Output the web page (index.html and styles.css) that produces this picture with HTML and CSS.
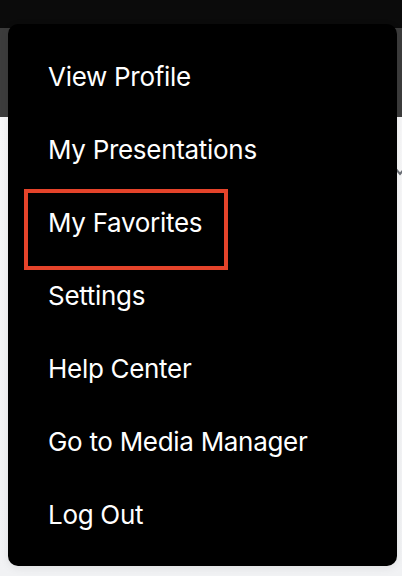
FILE: index.html
```html
<!DOCTYPE html>
<html lang="en">
<head>
<meta charset="utf-8">
<title>Menu</title>
<link rel="stylesheet" href="styles.css">
</head>
<body>
<div class="page">
  <div class="topbar"></div>
  <div class="toolbar"></div>
  <div class="content">
    <svg class="chevron" width="12" height="12" viewBox="0 0 12 12"><path d="M1 3 L6 9 L11 3" fill="none" stroke="#6b6f76" stroke-width="2"/></svg>
  </div>
  <nav class="menu">
    <a class="item">View Profile</a>
    <a class="item">My Presentations</a>
    <a class="item">My Favorites</a>
    <a class="item">Settings</a>
    <a class="item">Help Center</a>
    <a class="item">Go to Media Manager</a>
    <a class="item">Log Out</a>
    <div class="highlight"></div>
  </nav>
</div>
</body>
</html>
```
FILE: styles.css
```css
html, body {
  margin: 0;
  padding: 0;
}
body {
  width: 402px;
  height: 576px;
  overflow: hidden;
  font-family: Inter, "Liberation Sans", sans-serif;
}
.page {
  position: relative;
  width: 402px;
  height: 576px;
  display: flex;
  flex-direction: column;
  background: #f3f4f6;
}
.topbar {
  height: 28px;
  background: #0b0b0b;
}
.toolbar {
  height: 89px;
  background: #3c3c3c;
}
.content {
  flex: 1;
  position: relative;
  background: linear-gradient(#f7f7f8, #f1f2f4);
}
.chevron {
  position: absolute;
  left: 394px;
  top: 48px;
}
.menu {
  position: absolute;
  left: 8px;
  top: 24px;
  width: 389px;
  height: 542px;
  box-sizing: border-box;
  padding: 16px 0 15px;
  background: #000;
  border-radius: 10px;
  box-shadow: 0 2px 8px rgba(0, 0, 0, 0.08);
  display: flex;
  flex-direction: column;
}
.item {
  height: 73px;
  display: flex;
  align-items: center;
  padding-left: 40px;
  color: #fff;
  font-size: 26px;
  letter-spacing: -0.3px;
  line-height: 1;
}
.highlight {
  position: absolute;
  left: 16px;
  top: 165px;
  width: 204px;
  height: 81px;
  box-sizing: border-box;
  border: 4px solid #e5432a;
}
```
